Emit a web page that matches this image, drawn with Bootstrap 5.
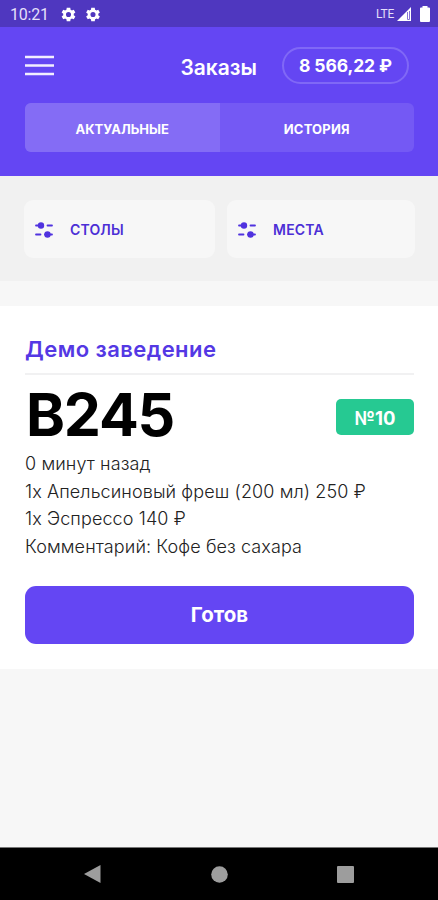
<!DOCTYPE html>
<html lang="ru">
<head>
<meta charset="utf-8">
<meta name="viewport" content="width=device-width, initial-scale=1">
<title>Заказы</title>
<link rel="stylesheet" href="https://cdn.jsdelivr.net/npm/bootstrap@5.3.0/dist/css/bootstrap.min.css">
<style>
body{font-family:Inter,"Liberation Sans",sans-serif;background:#f7f7f7;height:900px;overflow:hidden}
svg{display:block;flex:none}
.statusbar{height:27px;background:#4f37bf;font:400 16px/27px Roboto,sans-serif;letter-spacing:-.2px;color:#e4dffa;padding:1px 8px 0 10px}
.gears{margin-left:11px}
.lte{font-size:12px;letter-spacing:-.3px}
.signal{margin-left:3px}
.app-header{background:#6446f3;height:149px}
.title-row{height:76px;padding:0 29px 0 25px}
.title{font-size:21px;font-weight:600;line-height:26px;margin:5px 25px 0 0}
.balance{width:127px;height:37px;border:2px solid #8068f6;font-size:17.5px;font-weight:700;letter-spacing:-.1px;line-height:33px}
.tabs{height:49px;margin:0 24px 0 25px;border-radius:6px;background:#7459f4;font-size:13px;font-weight:700;line-height:52px}
.tab-on{background:#846cf5}
.tab-off{letter-spacing:.2px}
.filters{height:105px;background:#f1f1f1;padding:24px 23px 23px 24px;gap:12px}
.filter{background:#f7f7f7;border-radius:9px;color:#4c2fd6;font-size:14px;font-weight:600;letter-spacing:.15px;padding:1px 0 0 10px;gap:16px}
.order{margin-top:25px;height:363px;padding:28px 24px 0 25px}
.venue{color:#5438e4;font-size:22px;font-weight:600;letter-spacing:.45px;line-height:30px}
.divider{height:2px;background:#f1f1f2;margin-top:9px}
.number-row{height:75px}
.number{font-size:59px;font-weight:700;letter-spacing:-1.2px;line-height:75px;color:#000;padding:2px 0 0 1px}
.tag{width:78px;height:36px;border-radius:5px;background:#26c992;font-size:18.5px;font-weight:700;line-height:39px;margin-top:24px}
.lines{font-size:18px;font-weight:300;letter-spacing:.1px;line-height:27.6px;color:#222}
.ready{height:58px;border-radius:11px;background:#6446f3;font-size:20.500px;font-weight:700;margin-top:26px}
.navkeys{height:53px;background:#000;color:#9d9d9d;border-top:1px solid #777;padding:0 84px}
</style>
<script src="https://cdn.jsdelivr.net/npm/bootstrap@5.3.0/dist/js/bootstrap.bundle.min.js"></script>
</head>
<body class="d-flex flex-column">
<svg width="0" height="0" class="position-absolute">
<defs>
<symbol id="gear" viewBox="0 0 24 24"><path fill="currentColor" fill-rule="evenodd" d="M19.400 13a7.700 7.700 0 0 0 0-2l2.300-1.700-2.300-4-2.700 1.100a8 8 0 0 0-1.800-1L14.500 2.500h-5l-.4 2.900a8 8 0 0 0-1.800 1L4.600 5.300l-2.300 4L4.600 11a7.700 7.700 0 0 0 0 2l-2.300 1.700 2.300 4 2.700-1.100a8 8 0 0 0 1.800 1l.4 2.900h5l.4-2.900a8 8 0 0 0 1.800-1l2.700 1.100 2.300-4zM12 15.600a3.600 3.600 0 1 1 0-7.200 3.600 3.600 0 0 1 0 7.200z"/></symbol>
<symbol id="sliders" viewBox="0 0 20 18"><g fill="#5033df" stroke="#5033df" stroke-width="1.800" stroke-linecap="round"><path d="M2 4.500h7M13.500 4.500h4.500M2 13.500h4.500M11 13.500h7"/><circle cx="7" cy="4.500" r="2.300"/><circle cx="13.500" cy="13.500" r="2.300"/></g></symbol>
</defs>
</svg>
<div class="statusbar d-flex align-items-center">
  <span>10:21</span>
  <svg class="gears" width="42" height="17" viewBox="0 0 42 17" color="#fff"><use href="#gear" x="0" y="0" width="17" height="17"/><use href="#gear" x="24.500" y="0" width="17" height="17"/></svg>
  <span class="ms-auto lte">LTE</span>
  <svg width="15" height="15" viewBox="0 0 15 15" class="signal"><path d="M0 14L14 0v14z" fill="#fff"/><path d="M10.500 5v7.500h2V4" stroke="#8674d6" fill="none"/></svg>
  <svg width="10" height="16" viewBox="0 0 10 16" class="ms-2"><path d="M0 2.500q0-1 1-1h1.500V0h5v1.500H9q1 0 1 1v12.500q0 1-1 1H1q-1 0-1-1z" fill="#fff"/></svg>
</div>
<header class="app-header text-white">
  <div class="title-row d-flex align-items-center">
    <svg width="29" height="22" viewBox="0 0 29 22"><path d="M0 3h29M0 11.500h29M0 20h29" stroke="#f2eeff" stroke-width="2.600"/></svg>
    <h1 class="title ms-auto">Заказы</h1>
    <div class="balance rounded-pill text-center">8 566,22 ₽</div>
  </div>
  <div class="tabs d-flex text-center overflow-hidden">
    <div class="tab-on w-50">АКТУАЛЬНЫЕ</div>
    <div class="tab-off w-50">ИСТОРИЯ</div>
  </div>
</header>
<div class="filters d-flex">
  <div class="filter d-flex align-items-center flex-fill"><svg width="20" height="18"><use href="#sliders"/></svg><span>СТОЛЫ</span></div>
  <div class="filter d-flex align-items-center flex-fill"><svg width="20" height="18"><use href="#sliders"/></svg><span>МЕСТА</span></div>
</div>
<main class="order bg-white">
  <div class="venue">Демо заведение</div>
  <div class="divider"></div>
  <div class="number-row d-flex justify-content-between">
    <div class="number">B245</div>
    <div class="tag text-white text-center">№10</div>
  </div>
  <div class="lines">
    <div>0 минут назад</div>
    <div>1x Апельсиновый фреш (200 мл) 250 ₽</div>
    <div>1x Эспрессо 140 ₽</div>
    <div>Комментарий: Кофе без сахара</div>
  </div>
  <button class="ready btn w-100 text-white border-0">Готов</button>
</main>
<nav class="navkeys d-flex justify-content-between align-items-center mt-auto">
  <svg width="17" height="18" viewBox="0 0 17 18"><path d="M0 9L16.500 0v18z" fill="currentColor"/></svg>
  <svg width="17" height="17" viewBox="0 0 17 17"><circle cx="8.500" cy="8.500" r="8.300" fill="currentColor"/></svg>
  <svg width="17" height="17" viewBox="0 0 17 17"><rect width="17" height="17" rx="1" fill="currentColor"/></svg>
</nav>
</body>
</html>
